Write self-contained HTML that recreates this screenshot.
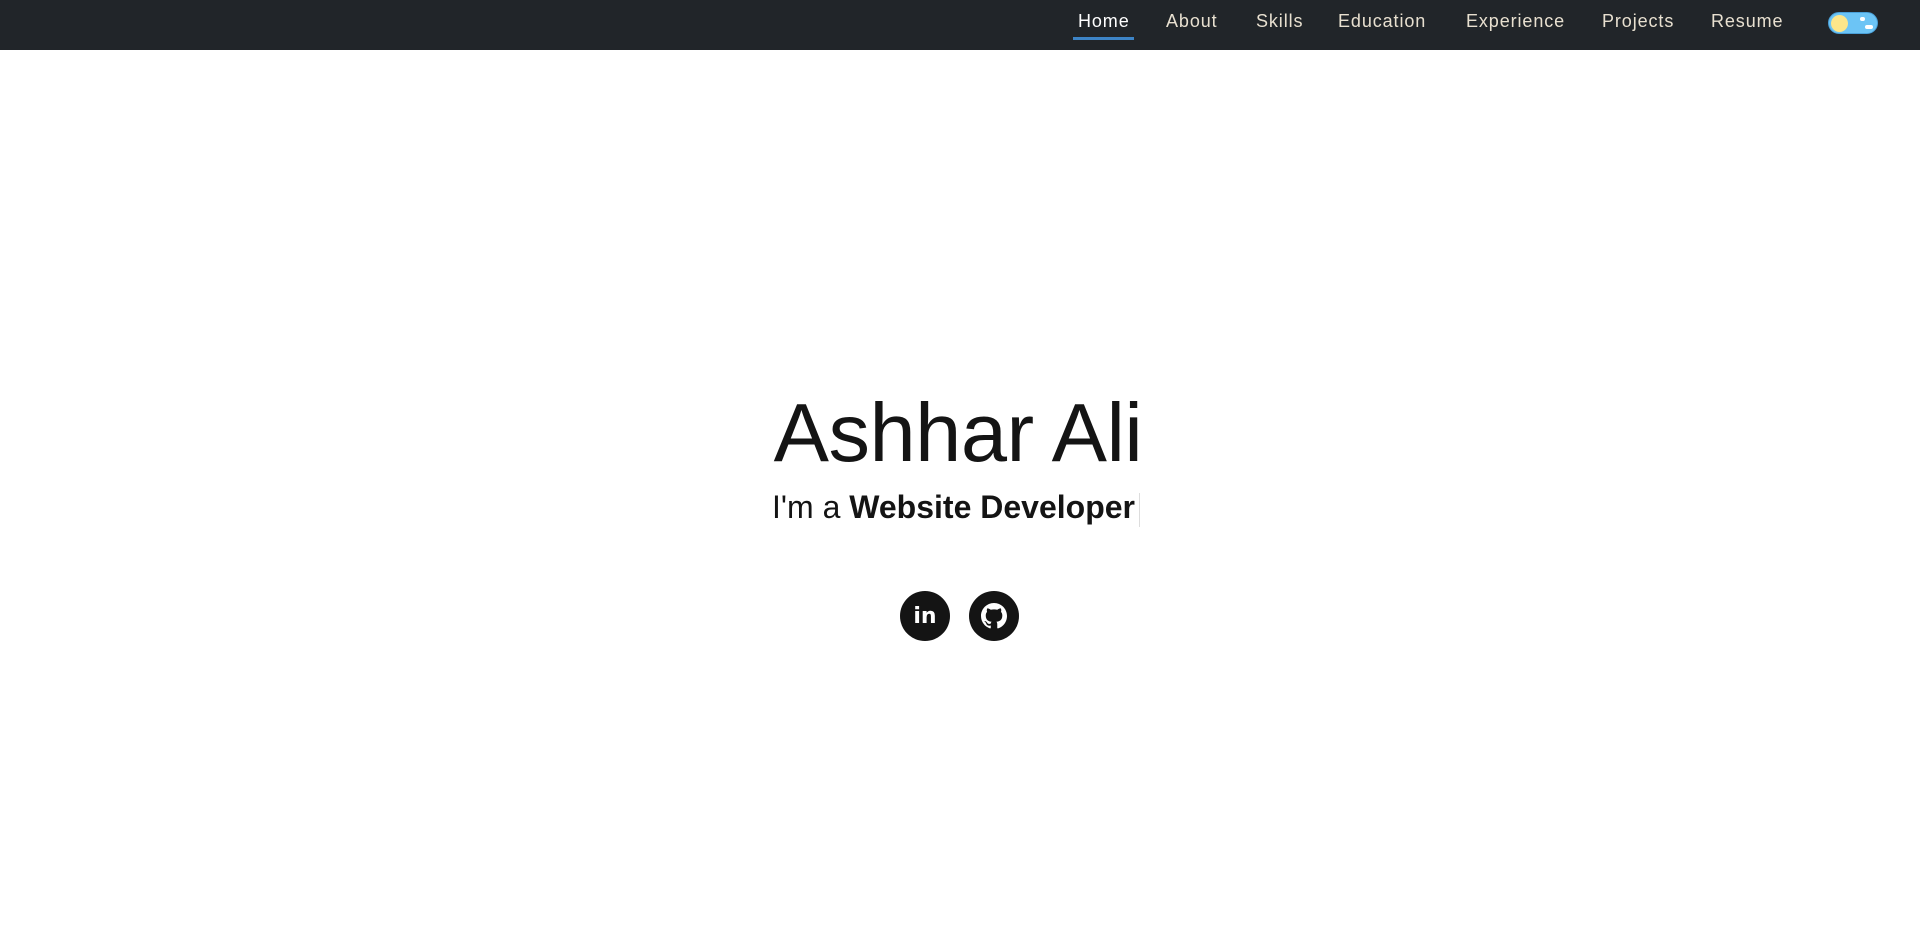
<!DOCTYPE html>
<html><head><meta charset="utf-8"><style>
*{margin:0;padding:0;box-sizing:border-box}
body{width:1920px;height:952px;background:#fff;font-family:"Liberation Sans",sans-serif;position:relative;overflow:hidden}
nav{position:absolute;left:0;top:0;width:1920px;height:50px;background:#212529}
nav a{position:absolute;top:11px;font-size:18px;color:#e8e0d0;letter-spacing:0.9px;text-decoration:none}
.ul{position:absolute;left:1073px;top:37px;width:61px;height:3px;background:#3d84c6}
.tog{position:absolute;left:1828px;top:12px;width:50px;height:22px;border-radius:11px;background:#6cc4f5;border:1px solid #4aa0d8}
.tog i{position:absolute;left:2px;top:2px;width:17px;height:17px;border-radius:50%;background:#fde68a}
.tog b{position:absolute;background:#fff;border-radius:3px}
h1{position:absolute;left:0;width:1916px;top:385px;text-align:center;font-size:83px;font-weight:normal;color:#141414;letter-spacing:-0.5px}
.sub{position:absolute;left:0;width:1912px;top:489px;text-align:center;font-size:32px;color:#141414}
.sub b{font-weight:bold}
.cur{display:inline-block;width:1px;height:34px;background:#ddd;vertical-align:middle;margin-left:4px}
.c{position:absolute;top:591px;width:50px;height:50px;border-radius:50%;background:#141414;color:#fff;display:flex;align-items:center;justify-content:center}
</style></head><body>
<nav>
<a style="left:1078px;color:#fff">Home</a>
<a style="left:1166px">About</a>
<a style="left:1256px">Skills</a>
<a style="left:1338px">Education</a>
<a style="left:1466px">Experience</a>
<a style="left:1602px">Projects</a>
<a style="left:1711px">Resume</a>
<div class="ul"></div>
<div class="tog"><i></i><b style="left:31px;top:4px;width:5px;height:4px"></b><b style="left:36px;top:12px;width:8px;height:4px"></b></div>
</nav>
<h1>Ashhar Ali</h1>
<div class="sub">I'm a <b>Website Developer</b><span class="cur"></span></div>
<div class="c" style="left:900px"><span style="font-weight:bold;font-size:22px;font-family:'DejaVu Sans',sans-serif">in</span></div>
<div class="c" style="left:969px"><svg width="26" height="26" viewBox="0 0 16 16" fill="#fff"><path d="M8 0C3.58 0 0 3.58 0 8c0 3.54 2.29 6.53 5.470 7.59.4.07.55-.17.55-.38v-1.33c-2.230.48-2.7-1.07-2.7-1.07-.36-.92-.89-1.17-.89-1.170-.73-.5.06-.49.06-.49.8.06 1.23.83 1.23.83.72 1.22 1.87.87 2.33.66.07-.52.28-.87.51-1.07-1.78-.2-3.64-.89-3.64-3.95 0-.87.31-1.59.82-2.15-.08-.2-.36-1.02.08-2.12 0 0 .67-.21 2.2.82a7.6 7.6 0 0 1 4 0c1.53-1.04 2.2-.82 2.2-.82.44 1.1.16 1.92.08 2.12.51.56.82 1.27.82 2.15 0 3.07-1.87 3.75-3.65 3.95.29.25.54.73.54 1.480v2.2c0 .21.15.46.55.38A8 8 0 0 0 16 8c0-4.42-3.58-8-8-8z"/></svg></div>
</body></html>
